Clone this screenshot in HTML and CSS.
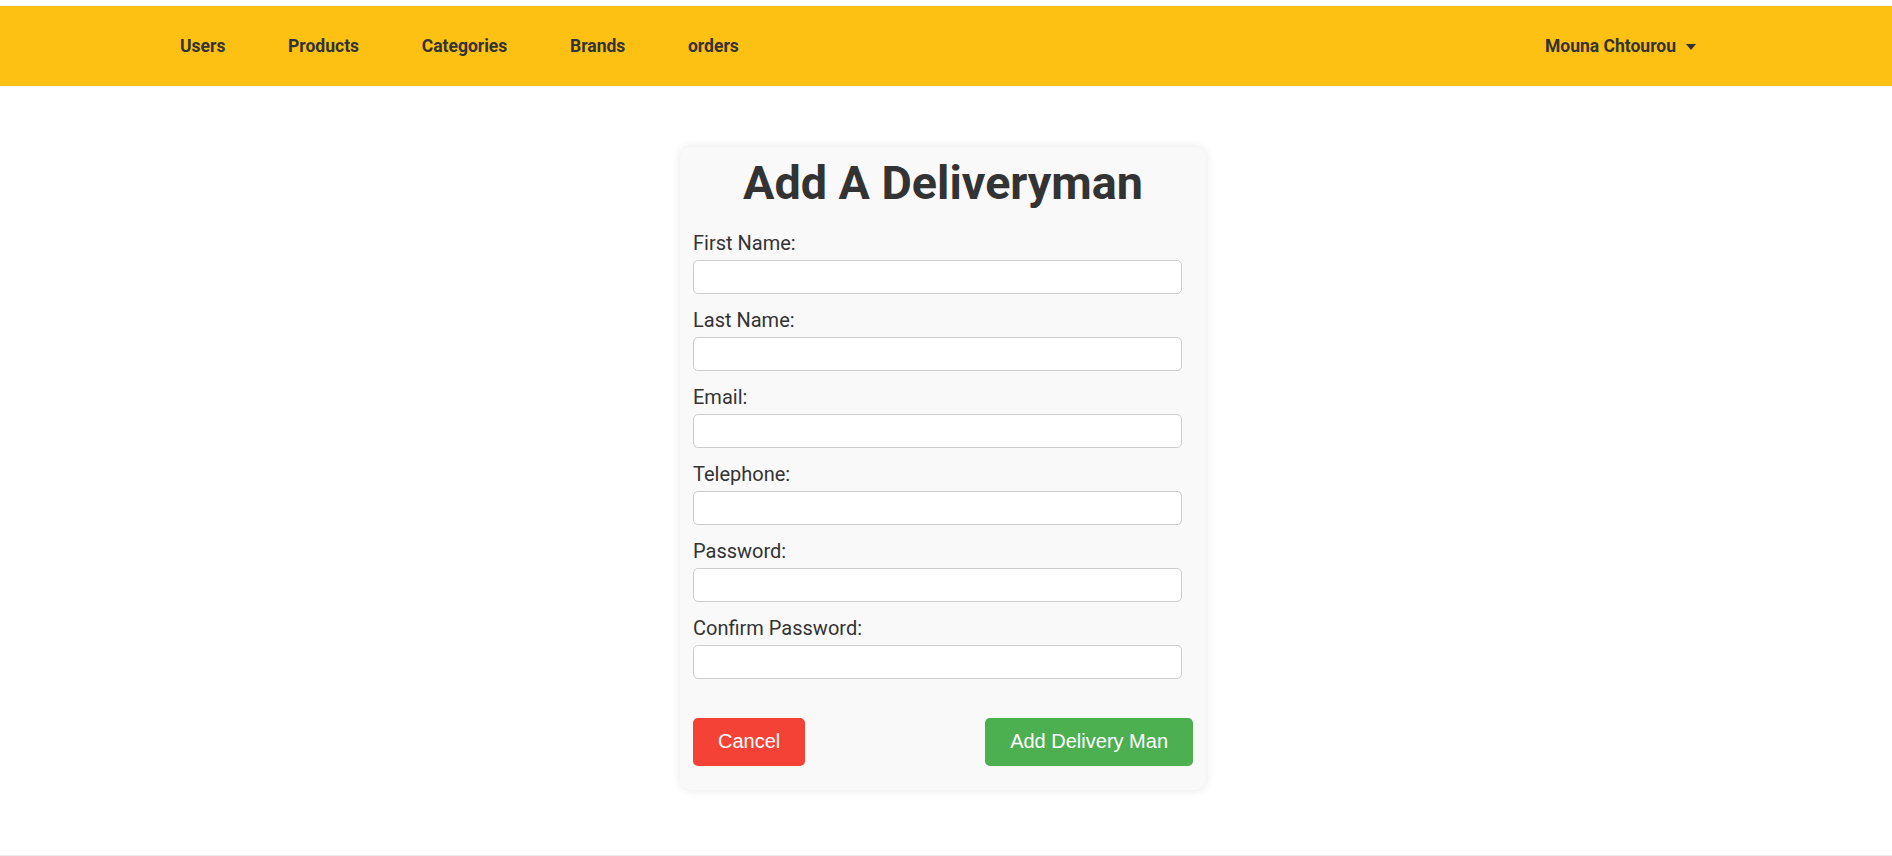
FILE: index.html
```html
<!DOCTYPE html>
<html lang="en">
<head>
<meta charset="utf-8">
<title>Add A Deliveryman</title>
<link rel="stylesheet" href="styles.css">
</head>
<body>
<nav class="navbar">
  <ul class="nav-links">
    <li><a href="#">Users</a></li>
    <li><a href="#">Products</a></li>
    <li><a href="#">Categories</a></li>
    <li><a href="#">Brands</a></li>
    <li><a href="#">orders</a></li>
  </ul>
  <div class="user-menu">
    <span class="user-name">Mouna Chtourou</span>
    <svg class="caret" width="10" height="6" viewBox="0 0 10 6"><path d="M0 0 H10 L5 6 Z" fill="#333"/></svg>
  </div>
</nav>
<main class="main">
  <form class="card">
    <h1 class="title">Add A Deliveryman</h1>
    <div class="group">
      <label for="fn">First Name:</label>
      <input id="fn" type="text">
    </div>
    <div class="group">
      <label for="ln">Last Name:</label>
      <input id="ln" type="text">
    </div>
    <div class="group">
      <label for="em">Email:</label>
      <input id="em" type="email">
    </div>
    <div class="group">
      <label for="tel">Telephone:</label>
      <input id="tel" type="text">
    </div>
    <div class="group">
      <label for="pw">Password:</label>
      <input id="pw" type="password">
    </div>
    <div class="group">
      <label for="cpw">Confirm Password:</label>
      <input id="cpw" type="password">
    </div>
    <div class="actions">
      <button type="button" class="btn btn-cancel">Cancel</button>
      <button type="submit" class="btn btn-add">Add Delivery Man</button>
    </div>
  </form>
</main>
<footer class="footer"></footer>
</body>
</html>
```
FILE: styles.css
```css
* { box-sizing: border-box; }
html, body { margin: 0; padding: 0; background: #fff; }
body {
  font-family: Roboto, "Liberation Sans", Arial, sans-serif;
  color: #333;
  height: 856px;
  overflow: hidden;
}
.navbar {
  margin-top: 6px;
  height: 80px;
  background: #fdc113;
  display: flex;
  align-items: center;
  justify-content: space-between;
  padding: 0 196px 0 180px;
}
.nav-links {
  list-style: none;
  margin: 0;
  padding: 0;
  display: flex;
  gap: 62.7px;
}
.nav-links a, .user-name {
  color: #333;
  text-decoration: none;
  font-weight: 700;
  font-size: 17.5px;
}
.user-menu {
  display: flex;
  align-items: center;
  gap: 10px;
}
.caret { display: block; margin-top: 1px; }
.main {
  display: flex;
  justify-content: center;
  padding-top: 61px;
  padding-right: 6px;
  height: 769px;
}
.card {
  width: 526px;
  align-self: flex-start;
  background: #f9f9f9;
  border-radius: 10px;
  box-shadow: 0 0 10px rgba(0, 0, 0, 0.1);
  padding: 13px;
}
.title {
  margin: 0 0 25px 0;
  text-align: center;
  font-size: 46.7px;
  line-height: 1;
  font-weight: 700;
  color: #333;
}
.group { margin-bottom: 15px; }
.group label {
  display: block;
  font-size: 20px;
  line-height: 22px;
  margin-bottom: 6px;
  color: #333;
}
.group input {
  display: block;
  width: 489px;
  height: 34px;
  border: 1px solid #ccc;
  border-radius: 5px;
  background: #fff;
  padding: 0 8px;
  font-size: 16px;
}
.actions {
  display: flex;
  justify-content: space-between;
  margin-top: 39px;
  margin-bottom: 11px;
}
.btn {
  height: 48px;
  padding: 0 25px;
  border: none;
  border-radius: 5px;
  color: #fff;
  font-family: "Liberation Sans", Arial, sans-serif;
  font-size: 20px;
  cursor: pointer;
}
.btn-cancel { background: #f44336; }
.btn-add { background: #4caf50; }
.footer {
  border-top: 1px solid #eee;
}
```
